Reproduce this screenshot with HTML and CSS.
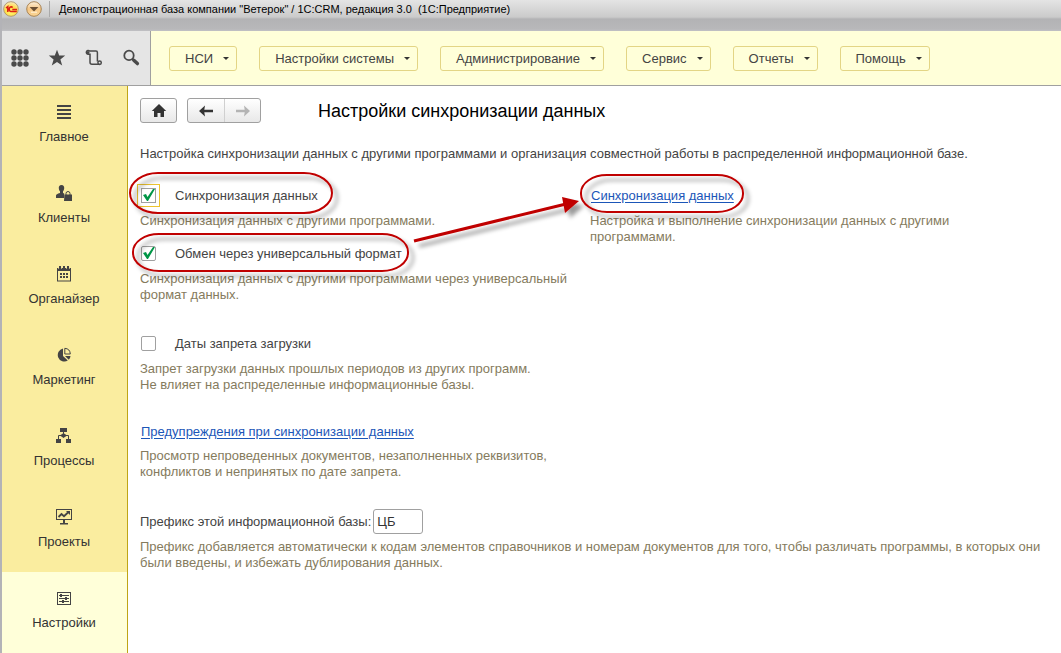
FILE: index.html
```html
<!DOCTYPE html>
<html lang="ru">
<head>
<meta charset="utf-8">
<title>Настройки синхронизации данных</title>
<link rel="stylesheet" href="styles.css">
</head>
<body>
<div class="window">
  <header class="titlebar">
    <svg class="orb" viewBox="0 0 16 16" aria-hidden="true">
      <defs>
        <radialGradient id="orbYellow" cx=".5" cy=".75" r=".7"><stop offset="0" stop-color="#fff36b"/><stop offset=".6" stop-color="#ffdc48"/><stop offset="1" stop-color="#fbe9b0"/></radialGradient>
        <linearGradient id="orbOrange" x1="0" y1="0" x2="0" y2="1"><stop offset="0" stop-color="#fdf0dc"/><stop offset=".5" stop-color="#f6c684"/><stop offset="1" stop-color="#fbd795"/></linearGradient>
      </defs>
      <circle cx="8" cy="8" r="7.3" fill="url(#orbYellow)" stroke="#a58a62" stroke-width=".8"/>
      <path d="M3 7l1.8-1.4V11M9.6 6.6C8.6 5.2 6.2 6 6.2 8.2s2 2.7 3.2 2.2h4.4M9.3 8.6H14" fill="none" stroke="#dc1f16" stroke-width="1.5"/>
    </svg>
    <button class="orb-button" aria-label="Главное меню">
      <svg class="orb" viewBox="0 0 16 16" aria-hidden="true">
        <circle cx="8" cy="8" r="7.3" fill="url(#orbOrange)" stroke="#a17a48" stroke-width=".9"/>
        <path d="M3.6 6h8.8L8 10.4z" fill="#6c5034"/><path d="M5 11.2h6" stroke="#fff4dc"/>
      </svg>
    </button>
    <span class="titlebar-divider"></span>
    <span class="titlebar-text">Демонстрационная база компании "Ветерок" / 1С:CRM, редакция 3.0&nbsp; (1С:Предприятие)</span>
  </header>

  <div class="topbar">
    <div class="tools">
      <button class="tool" aria-label="Меню функций"><svg viewBox="0 0 18 18" fill="#4a4a4a"><circle cx="3" cy="3" r="2.7"/><circle cx="9" cy="3" r="2.7"/><circle cx="15" cy="3" r="2.7"/><circle cx="3" cy="9" r="2.7"/><circle cx="9" cy="9" r="2.7"/><circle cx="15" cy="9" r="2.7"/><circle cx="3" cy="15" r="2.7"/><circle cx="9" cy="15" r="2.7"/><circle cx="15" cy="15" r="2.7"/></svg></button>
      <button class="tool" aria-label="Избранное"><svg viewBox="0 0 18 18" fill="#4a4a4a"><path d="M9 .8l2.2 5.6 6 .2-4.8 3.8 1.8 6L9 12.9l-5.2 3.500 1.800-6L.8 6.600l6-.2z"/></svg></button>
      <button class="tool" aria-label="История"><svg viewBox="0 0 18 18" fill="none" stroke="#4a4a4a" stroke-width="1.5"><path d="M3.400 5.200A1.900 1.900 0 1 1 4.600 2H11q1.400 0 1.400 1.400v9.200M3.400 5.200H5v8q0 2 2 2h7.600"/><circle cx="14.6" cy="13.7" r="1.7"/><circle cx="3" cy="3.5" r=".8"/></svg></button>
      <button class="tool" aria-label="Поиск"><svg viewBox="0 0 18 18" fill="none" stroke="#4a4a4a"><circle cx="7" cy="6.4" r="4.7" stroke-width="1.8"/><path d="M10.2 9.8l1.700 1.600" stroke-width="2"/><path d="M11.800 11.200l3.600 3.400" stroke-width="3.4" stroke-linecap="round"/></svg></button>
    </div>
    <nav class="menu">
      <button class="menu-button">НСИ<span class="caret"></span></button>
      <button class="menu-button">Настройки системы<span class="caret"></span></button>
      <button class="menu-button">Администрирование<span class="caret"></span></button>
      <button class="menu-button">Сервис<span class="caret"></span></button>
      <button class="menu-button">Отчеты<span class="caret"></span></button>
      <button class="menu-button">Помощь<span class="caret"></span></button>
    </nav>
  </div>

  <div class="workspace">
    <nav class="sidebar">
      <a class="section" href="#main"><svg viewBox="0 0 16 16" fill="#444"><path d="M1 1h14v2H1zM1 5h14v2H1zM1 9h14v2H1zM1 13h14v2H1z"/></svg>Главное</a>
      <a class="section" href="#clients"><svg viewBox="0 0 16 16" fill="#444"><path d="M5.500 0C7.500 0 8.400 1.400 8.200 3.200 8 5 7.400 5.800 7 6.300V8l1.200.6V13H0v-2.500Q0 9 4 8V6.300C3.500 5.800 3 5 2.800 3.200 2.600 1.400 3.500 0 5.500 0z"/><path d="M8.500 9.500h7.500V16H8z"/><path d="M10 10V8.500a2 2 0 0 1 4 0V10" fill="none" stroke="#444"/></svg>Клиенты</a>
      <a class="section" href="#organizer"><svg viewBox="0 0 16 16" fill="#444"><path fill-rule="evenodd" d="M1 2h14v13.500H1zM2 5v9.500h12V5z"/><path d="M3 0h2v3H3zM7 0h2v3H7zM11 0h2v3h-2zM4 7h2v2H4zM7 7h2v2H7zM10 7h2v2h-2zM4 10h2v2H4zM7 10h2v2H7zM10 10h2v2h-2z"/><path d="M2.500 1v2M5.500 1v2M10.500 1v2M13.500 1v2" stroke="#faed9f" stroke-width=".6"/></svg>Органайзер</a>
      <a class="section" href="#marketing"><svg viewBox="0 0 16 16" fill="#444"><path d="M7 1.500V9l4.800 4.600A6.600 6.600 0 1 1 7 1.500z"/><path d="M8.800 1.300a6 6 0 0 1 5.500 5.700H8.800z" fill="none" stroke="#444"/><path d="M9 9h5.500q-.2 2.300-1.700 3.800z"/></svg>Маркетинг</a>
      <a class="section" href="#processes"><svg viewBox="0 0 16 16" fill="#444"><path d="M4 0h7v4H4zM0 11h5v4H0zM10 11h5v4h-5zM7.500 5L11 7.500 7.500 10 4 7.500z"/><path d="M7.500 3v4.500M2.500 11V7.500h10V11" fill="none" stroke="#444"/></svg>Процессы</a>
      <a class="section" href="#projects"><svg viewBox="0 0 16 16" fill="#444"><path fill-rule="evenodd" d="M0 0h16v11H0zM1 1v9h14V1z"/><path d="M7 11h2v3h3v1.500H4V14h3zM10 2h4v4z"/><path d="M2.500 8l3-3 2.500 2.200L12.500 3" fill="none" stroke="#444" stroke-width="1.800"/></svg>Проекты</a>
      <a class="section section-active" href="#settings" aria-current="page"><svg viewBox="0 0 16 16" fill="#444"><path fill-rule="evenodd" d="M1 2h14v13H1zM2 3v11h12V3z"/><path d="M3 5h10v1H3zM3 8h10v1H3zM3 11h10v1H3zM4 4h2v3H4zM9 7h2v3H9zM6 10h2v3H6z"/></svg>Настройки</a>
    </nav>

    <main class="content">
      <div class="page-head">
        <button class="nav-button" aria-label="Домой"><svg viewBox="0 0 16 16" fill="#333"><path d="M8 1L.8 8H3v6h3.500v-4h3v4H13V8h2.200z"/></svg></button>
        <div class="nav-group">
          <button class="nav-half" aria-label="Назад"><svg viewBox="0 0 16 16" fill="#333"><path d="M7 2.500L1 8l6 5.500L6.300 9.200H15V6.800H6.300z"/></svg></button>
          <button class="nav-half" aria-label="Вперед" disabled><svg viewBox="0 0 16 16" fill="#b4b4b4"><path d="M9 2.500L15 8l-6 5.500.7-4.300H1V6.800h8.700z"/></svg></button>
        </div>
        <h1 class="page-title">Настройки синхронизации данных</h1>
      </div>

      <p class="lead">Настройка синхронизации данных с другими программами и организация совместной работы в распределенной информационной базе.</p>

      <div class="columns">
        <div class="column">
          <label class="option"><input class="check check-focused" type="checkbox" checked>Синхронизация данных</label>
          <p class="hint">Синхронизация данных с другими программами.</p>
          <label class="option"><input class="check" type="checkbox" checked>Обмен через универсальный формат</label>
          <p class="hint">Синхронизация данных с другими программами через универсальный<br>формат данных.</p>
        </div>
        <div class="column">
          <div class="option"><a class="link" href="#sync">Синхронизация данных</a></div>
          <p class="hint">Настройка и выполнение синхронизации данных с другими<br>программами.</p>
        </div>
      </div>

      <section class="group">
        <label class="option"><input class="check" type="checkbox">Даты запрета загрузки</label>
        <p class="hint">Запрет загрузки данных прошлых периодов из других программ.<br>Не влияет на распределенные информационные базы.</p>
      </section>

      <section class="group">
        <div class="option option-link"><a class="link" href="#warnings">Предупреждения при синхронизации данных</a></div>
        <p class="hint">Просмотр непроведенных документов, незаполненных реквизитов,<br>конфликтов и непринятых по дате запрета.</p>
      </section>

      <section class="group group-field">
        <div class="option"><label for="prefix">Префикс этой информационной базы:</label><input class="field" id="prefix" type="text" value="ЦБ"></div>
        <p class="hint">Префикс добавляется автоматически к кодам элементов справочников и номерам документов для того, чтобы различать программы, в которых они<br>были введены, и избежать дублирования данных.</p>
      </section>

      <svg class="callouts" width="640" height="120" viewBox="128 166 640 120" aria-hidden="true">
        <defs><filter id="soft" x="-10%" y="-20%" width="125%" height="150%"><feDropShadow dx="5" dy="5" stdDeviation="2" flood-color="#000" flood-opacity=".4"/></filter></defs>
        <g filter="url(#soft)" fill="none" stroke="#c00000" stroke-width="2">
          <rect x="130" y="173" width="202" height="40" rx="28" ry="20"/>
          <rect x="133" y="234" width="275" height="37" rx="26" ry="18"/>
          <rect x="581" y="175" width="162" height="37" rx="26" ry="18"/>
          <path d="M414 241L566 204" stroke-width="3"/>
          <path d="M562 197l17 4-14 12z" fill="#c00000" stroke="none"/>
        </g>
      </svg>
    </main>
  </div>
</div>
</body>
</html>
```
FILE: styles.css
```css
* { box-sizing: border-box; }
body {
  margin: 0;
  background: #fff;
  color: #444;
  font: 13px/16px "Liberation Sans", Arial, sans-serif;
}
button { font: inherit; color: inherit; margin: 0; }
svg { display: block; }
p, h1 { margin: 0; }

.window {
  min-height: 100vh;
  display: flex;
  flex-direction: column;
  border-left: 2px solid #b3b3b7;
}

.titlebar {
  height: 31px;
  display: flex;
  align-items: flex-start;
  padding: 1px 0 0 1px;
  background: linear-gradient(#e4e4e4 0, #cbcbcb 17px, #b3b3b5 19px, #b8b8ba 29px, #c0c0c4 31px);
}
.orb { width: 16px; height: 16px; }
.orb-button { border: 0; padding: 0; background: none; margin-left: 7px; }
.titlebar-divider { width: 1px; height: 16px; margin: 0 9px 0 7px; background: #aaa; }
.titlebar-text { color: #000; font-size: 11px; }

.topbar {
  display: flex;
  height: 55px;
  background: #ffffd9;
  border-bottom: 1px solid #a0a0a0;
}
.tools {
  display: flex;
  align-items: center;
  gap: 19px;
  width: 149px;
  padding-left: 9px;
  background: #e5e5e5;
  border-right: 1px solid #a0a0a0;
}
.tool { border: 0; padding: 0; background: none; width: 18px; height: 18px; }
.menu { display: flex; align-items: center; gap: 22px; padding-left: 18px; }
.menu-button {
  display: flex;
  align-items: center;
  height: 25px;
  padding: 1px 7px 0 15px;
  border: 1px solid #e3d585;
  border-radius: 3px;
  background: transparent;
}
.caret {
  margin-left: 10px;
  border: 3px solid transparent;
  border-top-color: #333;
  border-bottom: 0;
}

.workspace { flex: 1; display: flex; }
.sidebar {
  width: 126px;
  background: #faed9f;
  border-right: 1px solid #bfa516;
}
.section {
  height: 81px;
  display: flex;
  flex-direction: column;
  align-items: center;
  gap: 9px;
  padding: 18px 1px 0 0;
  color: #333;
  text-decoration: none;
}
.section svg { width: 16px; height: 16px; }
.section-active { background: #ffffd9; }

.content { position: relative; flex: 1; padding: 12px 12px 0; }
.page-head { display: flex; align-items: center; height: 25px; }
.nav-button, .nav-group {
  height: 25px;
  border: 1px solid #a0a0a0;
  border-radius: 3px;
  background: linear-gradient(#fff, #e8e8e8);
}
.nav-button { width: 37px; padding: 0 10px; }
.nav-group { display: flex; width: 74px; margin-left: 10px; }
.nav-half { flex: 1; border: 0; padding: 0 10px; background: none; }
.nav-half + .nav-half { border-left: 1px solid #d0d0d0; }
.nav-button svg, .nav-half svg { width: 16px; height: 16px; }
.page-title { margin-left: 57px; color: #000; font-size: 18px; font-weight: 400; line-height: 24px; }

.lead { margin-top: 23px; }
.columns { display: grid; grid-template-columns: 450px 1fr; margin-top: 20px; }
.column .hint + .option { margin-top: 11px; }
.option { display: flex; align-items: center; height: 27px; }
.option-link { height: 24px; }
.hint { color: #857b5d; margin-top: 4px; }
.group { margin-top: 27px; }
.group-field { margin-top: 28px; }
.link { color: #1b56b8; padding-left: 1px; text-underline-offset: 2px; }

.check {
  appearance: none;
  width: 15px;
  height: 15px;
  margin: 0 19px 0 1px;
  border: 1px solid #a0a0a0;
  border-radius: 2px;
  background: #fff;
}
.check:checked {
  background: url("data:image/svg+xml,%3Csvg xmlns='http://www.w3.org/2000/svg' viewBox='0 0 13 13'%3E%3Cpath d='M1 6l3-1 1.500 3L11 0h2L6 12H5z' fill='%23009646'/%3E%3C/svg%3E") center / 13px 13px no-repeat;
}
.check-focused { border-radius: 0; outline: 1px solid #edc42f; outline-offset: 3px; }
.field {
  width: 50px;
  height: 25px;
  margin-left: 2px;
  padding: 0 3px;
  border: 1px solid #a0a0a0;
  border-radius: 3px;
  color: #333;
  font: inherit;
}

/* Highlight marks drawn over the form */
.callouts { position: absolute; left: 0; top: 80px; pointer-events: none; }
```
